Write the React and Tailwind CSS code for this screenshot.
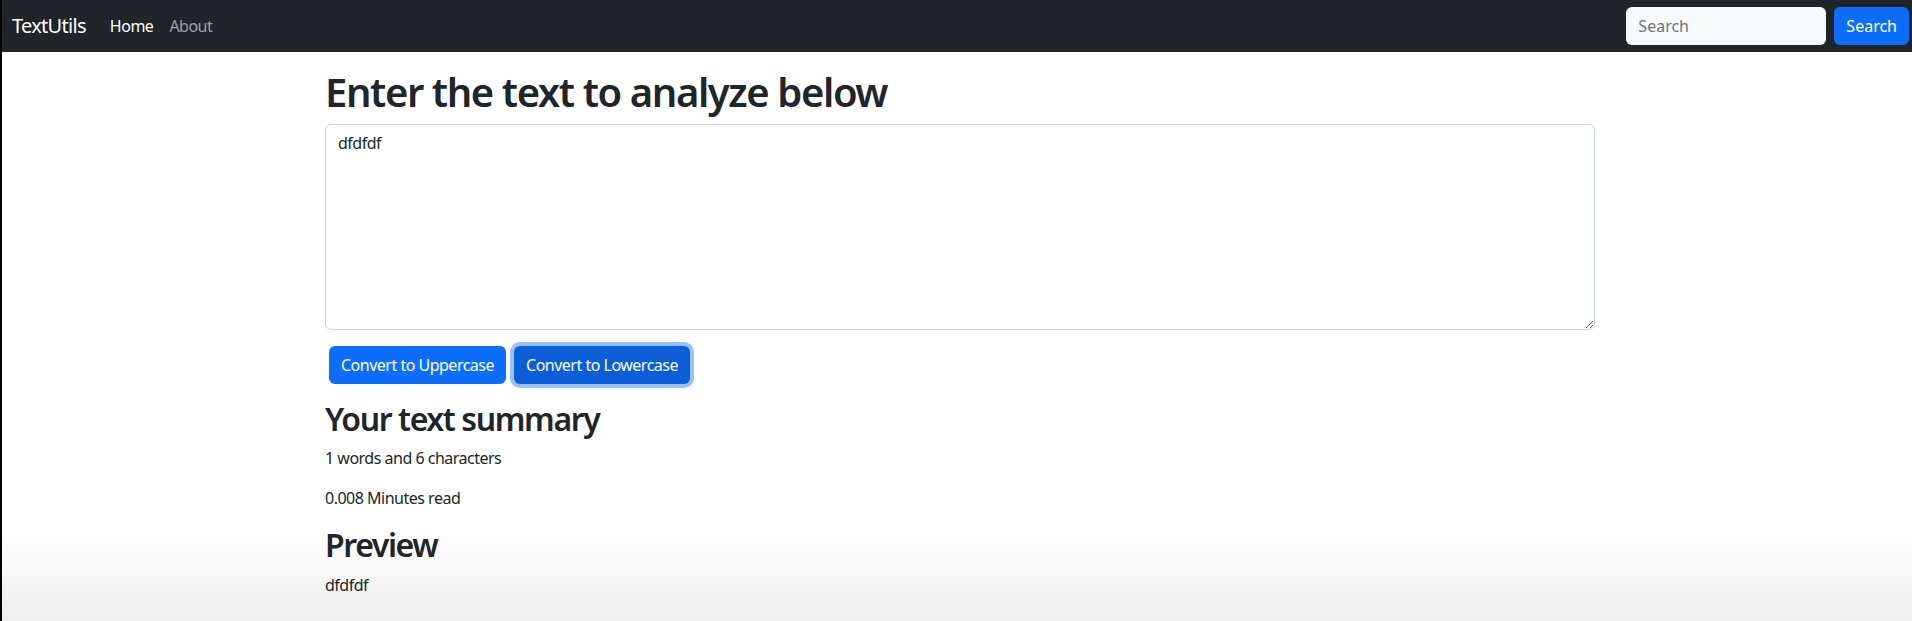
import React, { useState } from "react";

const font = { fontFamily: '"Segoe UI", "Noto Sans", "Liberation Sans", sans-serif' };

function Navbar() {
  return (
    <nav className="flex h-[52px] items-center justify-between bg-[#212529] pl-[10px] pr-[3px]">
      <div className="flex items-center tracking-[-0.5px]">
        <a href="#" className="mr-4 text-[20px] leading-[30px] tracking-[-0.7px] text-white">
          TextUtils
        </a>
        <ul className="flex items-center">
          <li>
            <a href="#" className="px-2 text-base text-white">
              Home
            </a>
          </li>
          <li>
            <a href="#" className="px-2 text-base text-white/55">
              About
            </a>
          </li>
        </ul>
      </div>
      <form className="flex items-center gap-2" onSubmit={(e) => e.preventDefault()}>
        <input
          type="search"
          placeholder="Search"
          className="h-[38px] w-[200px] rounded-[6px] bg-[#f8f9fa] px-3 text-base text-[#212529] outline-none placeholder:text-[#6c757d]"
        />
        <button className="h-[38px] rounded-[6px] bg-[#0d6efd] px-3 text-base text-white">
          Search
        </button>
      </form>
    </nav>
  );
}

function TextForm() {
  const [text, setText] = useState("dfdfdf");

  const words = text.split(/\s+/).filter((w) => w.length > 0).length;

  return (
    <div className="ml-[323px] w-[1270px] text-[#212529] tracking-[-0.5px]">
      <div className="mt-4">
        <h1 className="mb-2 text-[40px] font-semibold leading-[1.2] tracking-[-1.4px]">
          Enter the text to analyze below
        </h1>
        <div className="mb-4">
          <textarea
            value={text}
            onChange={(e) => setText(e.target.value)}
            rows={8}
            spellCheck
            className="block h-[206px] w-full rounded-[6px] border border-[#ced4da] bg-white px-3 py-1.5 text-base leading-6 text-[#212529] outline-none"
          />
        </div>
        <button
          onClick={() => setText(text.toUpperCase())}
          className="mx-1 h-[38px] rounded-[6px] bg-[#0d6efd] px-3 text-base text-white"
        >
          Convert to Uppercase
        </button>
        <button
          onClick={() => setText(text.toLowerCase())}
          className="mx-1 h-[38px] rounded-[6px] bg-[#0b5ed7] px-3 text-base text-white ring-4 ring-[#3184fd]/50"
        >
          Convert to Lowercase
        </button>
      </div>

      <div className="my-4">
        <h2 className="mb-2 text-[32px] font-semibold leading-[1.2] tracking-[-1.4px]">Your text summary</h2>
        <p className="mb-4 text-base leading-6">
          {words} words and {text.length} characters
        </p>
        <p className="mb-4 text-base leading-6">{0.008 * words} Minutes read</p>
        <h2 className="mb-2 text-[32px] font-semibold leading-[1.2] tracking-[-1.4px]">Preview</h2>
        <p className="text-base leading-6">{text}</p>
      </div>
    </div>
  );
}

export default function App() {
  return (
    <div
      style={font}
      className="h-[621px] overflow-hidden border-l-2 border-black bg-[linear-gradient(to_bottom,#ffffff_0px,#ffffff_530px,#eeeeee_621px)]"
    >
      <Navbar />
      <TextForm />
    </div>
  );
}
